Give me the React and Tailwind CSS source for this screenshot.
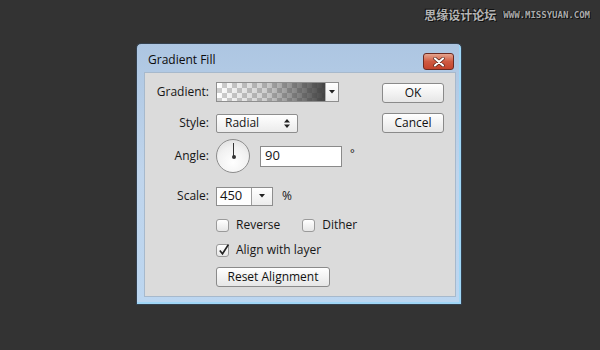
import React from "react";

// small helpers for the dialog controls
const Label = ({ children }) => (
  <span className="w-[65px] shrink-0 text-right pr-[1px]">{children}</span>
);

const Checkbox = ({ checked, label }) => (
  <label className="flex items-center gap-[7px]">
    <span className="relative w-[13px] h-[13px] rounded-[3px] border border-[#9a9a9a] bg-gradient-to-b from-[#ffffff] to-[#e6e6e6]">
      {checked && (
        <svg
          className="absolute left-[1px] top-[-2px]"
          width="12"
          height="13"
          viewBox="0 0 12 13"
        >
          <path d="M1.8 7.5 L4.5 10.8 L10.5 1.5" fill="none" stroke="#222" strokeWidth="1.6" />
        </svg>
      )}
    </span>
    <span>{label}</span>
  </label>
);

const Button = ({ children, className = "" }) => (
  <button
    className={`h-[20px] rounded-[3px] border border-[#8a8a8a] bg-gradient-to-b from-[#ffffff] to-[#e6e6e6] text-[12px] leading-none text-[#111] ${className}`}
  >
    {children}
  </button>
);

const App = () => {
  return (
    <div className="w-[600px] h-[350px] overflow-hidden bg-[#333333] font-['Open_Sans',sans-serif] text-[12px] text-[#161616]">
      {/* watermark */}
      <div className="h-[43px] flex justify-end items-start pt-[7px] pr-[10px] gap-[7px]">
        <span className="font-['Noto_Sans_CJK_SC',sans-serif] text-[12px] leading-[16px] text-[#b4b4b4] font-bold [text-shadow:1px_1px_0_#111,-1px_-1px_0_#111]">
          思缘设计论坛
        </span>
        <span className="font-['DejaVu_Sans_Mono',monospace] text-[9px] leading-[16px] font-bold text-[#aaaaaa] [text-shadow:1px_1px_0_#111,-1px_0_0_#111]">
          WWW.MISSYUAN.COM
        </span>
      </div>

      {/* dialog window */}
      <div className="ml-[136px] w-[326px] h-[262px] flex flex-col border border-[#34414f] rounded-t-[5px] bg-gradient-to-b from-[#adc6e2] via-[#c0d5ec] to-[#bcd6f0] shadow-[inset_-2px_-2px_0_#9fd6f6]">
        {/* title bar */}
        <div className="h-[28px] flex items-start justify-between pl-[11px] pr-[7px]">
          <span className="mt-[9px] text-[12px] leading-[14px] text-[#0b0b0b]">
            Gradient Fill
          </span>
          <div className="mt-[9px] w-[31px] h-[17px] rounded-[3px] border border-[#6b2a22] bg-gradient-to-b from-[#e5a48f] via-[#cf5a42] to-[#c4432c] flex items-center justify-center">
            <svg width="12" height="10" viewBox="0 0 12 10">
              <path
                d="M2 1.5 L10 8.5 M10 1.5 L2 8.5"
                stroke="#4a1a12"
                strokeWidth="3.4"
                strokeLinecap="round"
              />
              <path
                d="M2 1.5 L10 8.5 M10 1.5 L2 8.5"
                stroke="#ffffff"
                strokeWidth="2.2"
                strokeLinecap="round"
              />
            </svg>
          </div>
        </div>

        {/* content panel */}
        <div className="ml-[7px] mr-[5px] mb-[7px] flex-1 flex border border-[#a7b9cc] bg-[#dbdbdb]">
          {/* form column */}
          <div className="w-[237px] flex flex-col">
            {/* gradient */}
            <div className="mt-[9px] h-[20px] flex items-center gap-[6px]">
              <Label>Gradient:</Label>
              <div className="w-[123px] h-[20px] flex border border-[#8e8e8e] bg-white">
                <div className="flex-1 [background:linear-gradient(90deg,rgba(60,60,60,0)_0%,rgba(60,60,60,0.25)_45%,rgba(60,60,60,0.95)_100%),repeating-conic-gradient(#cfcfcf_0_25%,#ffffff_0_50%)_0_0/10px_10px]" />
                <div className="w-[13px] flex items-center justify-center bg-gradient-to-b from-white to-[#ececec] border-l border-[#b0b0b0]">
                  <svg width="6" height="4" viewBox="0 0 6 4">
                    <path d="M0 0 H6 L3 3.5 Z" fill="#222" />
                  </svg>
                </div>
              </div>
            </div>

            {/* style */}
            <div className="mt-[12px] h-[18px] flex items-center gap-[6px]">
              <Label>Style:</Label>
              <div className="w-[82px] h-[19px] flex items-center justify-between pl-[8px] pr-[7px] rounded-[2px] border border-[#8e8e8e] bg-gradient-to-b from-white to-[#ebebeb]">
                <span>Radial</span>
                <svg width="6" height="9" viewBox="0 0 6 9">
                  <path d="M0 3.5 L3 0 L6 3.5 Z M0 5.5 H6 L3 9 Z" fill="#222" />
                </svg>
              </div>
            </div>

            {/* angle */}
            <div className="mt-[7px] h-[34px] flex items-center gap-[6px]">
              <Label>Angle:</Label>
              <div className="relative w-[34px] h-[34px] rounded-full border border-[#8d8d8d] bg-[radial-gradient(circle_at_50%_70%,#ffffff_0%,#f1f1f1_55%,#d8d8d8_100%)]">
                <span className="absolute left-[16px] top-[3px] w-[1px] h-[14px] bg-[#333]" />
                <span className="absolute left-[14.5px] top-[15px] w-[4px] h-[4px] rounded-full bg-[#333]" />
              </div>
              <div className="ml-[4px] w-[82px] h-[21px] flex items-center pl-[4px] border border-[#8a8a8a] bg-white text-[13px]">
                90
              </div>
              <span className="ml-[2px] -mt-[6px] text-[11px]">°</span>
            </div>

            {/* scale */}
            <div className="mt-[14px] h-[18px] flex items-center gap-[6px]">
              <Label>Scale:</Label>
              <div className="w-[57px] h-[19px] flex border border-[#8e8e8e] bg-white">
                <span className="flex-1 flex items-center pl-[3px] text-[13px]">450</span>
                <span className="w-[21px] flex items-center justify-center border-l border-[#9c9c9c] bg-gradient-to-b from-white to-[#ececec]">
                  <svg width="6" height="4" viewBox="0 0 6 4">
                    <path d="M0 0 H6 L3 3.5 Z" fill="#222" />
                  </svg>
                </span>
              </div>
              <span className="ml-[3px] text-[12px]">%</span>
            </div>

            {/* options */}
            <div className="mt-[13px] pl-[71px] flex items-center gap-[22px] h-[14px]">
              <Checkbox label="Reverse" />
              <Checkbox label="Dither" />
            </div>
            <div className="mt-[11px] pl-[71px] h-[14px] flex items-center">
              <Checkbox checked label="Align with layer" />
            </div>
            <div className="mt-[10px] pl-[71px]">
              <Button className="w-[114px]">Reset Alignment</Button>
            </div>
          </div>

          {/* buttons column */}
          <div className="flex flex-col gap-[10px] pt-[10px]">
            <Button className="w-[62px]">OK</Button>
            <Button className="w-[62px]">Cancel</Button>
          </div>
        </div>
      </div>
    </div>
  );
};

export default App;
